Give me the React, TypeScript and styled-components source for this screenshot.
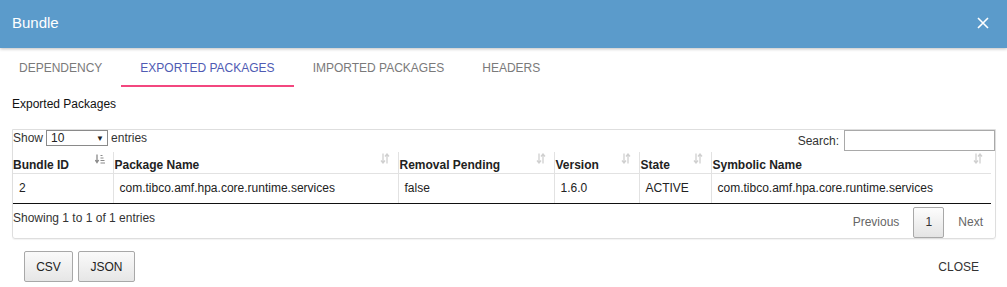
import styled, { createGlobalStyle } from 'styled-components'

const GlobalStyle = createGlobalStyle`
  html, body {
    margin: 0;
    padding: 0;
    background: #fff;
    font-family: "Liberation Sans", Arial, sans-serif;
    font-size: 12px;
    color: #222;
  }
`

const tabs = ['Dependency', 'Exported Packages', 'Imported Packages', 'Headers']

const columns = [
  { title: 'Bundle ID', width: 100, sorted: true },
  { title: 'Package Name', width: 285 },
  { title: 'Removal Pending', width: 156 },
  { title: 'Version', width: 85 },
  { title: 'State', width: 72 },
  { title: 'Symbolic Name', width: 280 },
]

const rows = [
  ['2', 'com.tibco.amf.hpa.core.runtime.services', 'false', '1.6.0', 'ACTIVE', 'com.tibco.amf.hpa.core.runtime.services'],
]

function SortIcon ({ active }: { active?: boolean }) {
  const c = active ? '#8a8a8a' : '#d0d0d0'
  if (active) {
    return (
      <svg width="10" height="10" viewBox="0 0 10 10">
        <path d="M2 0.5v7.5M0.3 6l1.7 2.5 1.7-2.5" stroke={c} strokeWidth="1.3" fill="none" />
        <path d="M5.5 1.5h2M5.5 4h3M5.5 6.5h4M5.5 9h4.5" stroke={c} strokeWidth="1" />
      </svg>
    )
  }
  return (
    <svg width="10" height="11" viewBox="0 0 10 11">
      <path d="M3 0.5v9M1 7.5l2 2.5 2-2.5" stroke={c} strokeWidth="1.3" fill="none" />
      <path d="M7 10.5v-9M5 3.5l2-2.5 2 2.5" stroke={c} strokeWidth="1.3" fill="none" />
    </svg>
  )
}

function App () {
  return (
    <>
      <GlobalStyle />
      <Dialog>
        <Header>
          <Title>Bundle</Title>
          <CloseIcon viewBox="0 0 12 12">
            <path d="M1 1l10 10M11 1L1 11" stroke="#fff" strokeWidth="1.6" />
          </CloseIcon>
        </Header>
        <TabBar>
          {tabs.map(t => (
            <Tab key={t} $active={t === 'Exported Packages'}>{t}</Tab>
          ))}
        </TabBar>
        <Content>
          <SectionTitle>Exported Packages</SectionTitle>
          <Panel>
            <Controls>
              <Length>
                Show
                <FakeSelect>
                  <span>10</span>
                  <span className="caret">▼</span>
                </FakeSelect>
                entries
              </Length>
              <Search>
                Search:
                <SearchInput />
              </Search>
            </Controls>
            <Table>
              <colgroup>
                {columns.map(c => <col key={c.title} style={{ width: c.width }} />)}
              </colgroup>
              <thead>
                <tr>
                  {columns.map((c, i) => (
                    <Th key={c.title} $first={i === 0}>
                      {c.title}
                      <SortSlot><SortIcon active={c.sorted} /></SortSlot>
                    </Th>
                  ))}
                </tr>
              </thead>
              <tbody>
                {rows.map((r, ri) => (
                  <tr key={ri}>
                    {r.map((v, i) => <Td key={i} $first={i === 0}>{v}</Td>)}
                  </tr>
                ))}
              </tbody>
            </Table>
            <Footer>
              <Info>Showing 1 to 1 of 1 entries</Info>
              <Pager>
                <PageLink>Previous</PageLink>
                <PageButton>1</PageButton>
                <PageLink>Next</PageLink>
              </Pager>
            </Footer>
          </Panel>
        </Content>
        <Actions>
          <ButtonGroup>
            <ExportButton $width={49}>CSV</ExportButton>
            <ExportButton $width={57}>JSON</ExportButton>
          </ButtonGroup>
          <CloseText>CLOSE</CloseText>
        </Actions>
      </Dialog>
    </>
  )
}

const Dialog = styled.div`
  width: 1007px;
  height: 287px;
  overflow: hidden;
  background: #fff;
`

const Header = styled.div`
  height: 48px;
  background: #5b9bcb;
  display: flex;
  align-items: center;
  justify-content: space-between;
  padding: 0 18px 0 12px;
  box-shadow: 0 1px 3px rgba(0, 0, 0, 0.25);
  position: relative;
  z-index: 1;
`

const Title = styled.div`
  color: #fff;
  font-size: 15px;
  margin-top: -3px;
`

const CloseIcon = styled.svg`
  width: 12px;
  height: 12px;
  margin-top: -2px;
`

const TabBar = styled.div`
  display: flex;
  height: 39px;
`

const Tab = styled.div<{ $active?: boolean }>`
  padding: 2px 19px 0;
  display: flex;
  align-items: center;
  text-transform: uppercase;
  font-size: 12px;
  color: ${p => (p.$active ? '#4f5bb3' : '#7a7a7a')};
  border-bottom: 2px solid ${p => (p.$active ? '#f3477f' : 'transparent')};
`

const Content = styled.div`
  padding: 10px 11px 0 12px;
`

const SectionTitle = styled.div`
  font-size: 12px;
  color: #111;
  line-height: 14px;
  margin-bottom: 18px;
`

const Panel = styled.div`
  border: 1px solid #dedede;
  border-radius: 0 0 3px 3px;
  box-shadow: 0 1px 1px rgba(0, 0, 0, 0.05);
  height: 108px;
`

const Controls = styled.div`
  display: flex;
  justify-content: space-between;
  align-items: flex-start;
  height: 22px;
`

const Length = styled.div`
  display: flex;
  align-items: center;
  gap: 3px;
  height: 16px;
  color: #333;
`

const FakeSelect = styled.div`
  width: 53px;
  height: 14px;
  border: 1px solid #8a8a8a;
  display: flex;
  justify-content: space-between;
  align-items: center;
  padding: 0 3px 0 4px;
  box-sizing: content-box;
  color: #222;
  .caret {
    font-size: 8px;
    color: #222;
  }
`

const Search = styled.div`
  display: flex;
  align-items: center;
  gap: 5px;
  color: #333;
  height: 21px;
`

const SearchInput = styled.div`
  width: 149px;
  height: 19px;
  border: 1px solid #a9a9a9;
  box-sizing: content-box;
`

const Table = styled.table`
  border-collapse: collapse;
  table-layout: fixed;
  width: 978px;
  font-size: 12px;
`

const Th = styled.th<{ $first?: boolean }>`
  position: relative;
  text-align: left;
  font-weight: bold;
  color: #222;
  height: 21px;
  padding: 5px 14px 0 ${p => (p.$first ? '0' : '1px')};
  border-bottom: 1px solid #e2e2e2;
  border-left: ${p => (p.$first ? 'none' : '1px solid #e2e2e2')};
  box-sizing: border-box;
  white-space: nowrap;
`

const SortSlot = styled.span`
  position: absolute;
  right: 8px;
  top: 1px;
`

const Td = styled.td<{ $first?: boolean }>`
  height: 30px;
  padding: 0 0 0 6px;
  color: #222;
  border-left: ${p => (p.$first ? 'none' : '1px solid #e2e2e2')};
  border-bottom: 1px solid #111;
  box-sizing: border-box;
  white-space: nowrap;
`

const Footer = styled.div`
  display: flex;
  justify-content: space-between;
  align-items: flex-start;
  height: 34px;
  padding-right: 8px;
`

const Info = styled.div`
  color: #333;
  margin-top: 7px;
`

const Pager = styled.div`
  display: flex;
  align-items: center;
  margin-top: 3px;
`

const PageLink = styled.div`
  color: #666;
  padding: 0 14px;
  &:last-child {
    padding-right: 4px;
  }
`

const PageButton = styled.div`
  width: 29px;
  height: 29px;
  border: 1px solid #a8a8a8;
  border-radius: 2px;
  background: linear-gradient(#fdfdfd, #e4e4e4);
  display: flex;
  align-items: center;
  justify-content: center;
  color: #333;
`

const Actions = styled.div`
  display: flex;
  justify-content: space-between;
  align-items: center;
  padding: 12px 28px 0 24px;
`

const ButtonGroup = styled.div`
  display: flex;
  gap: 5px;
`

const ExportButton = styled.div<{ $width: number }>`
  width: ${p => p.$width}px;
  height: 31px;
  box-sizing: border-box;
  border: 1px solid #a8a8a8;
  border-radius: 2px;
  background: linear-gradient(#fafafa, #e6e6e6);
  display: flex;
  align-items: center;
  justify-content: center;
  color: #222;
`

const CloseText = styled.div`
  color: #333;
  font-size: 12px;
`

export default App
